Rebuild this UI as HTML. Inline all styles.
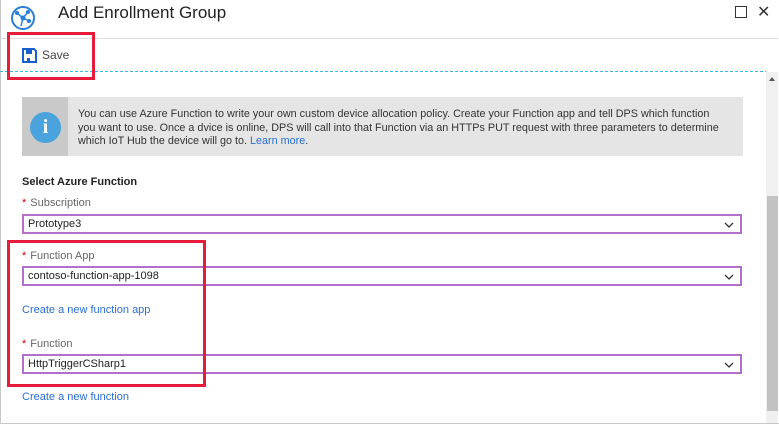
<!DOCTYPE html>
<html><head><style>
body{margin:0;width:779px;height:425px;overflow:hidden;background:#fff;font-family:"Liberation Sans",sans-serif;position:relative}
.a{position:absolute}
.t{font-size:10.8px;color:#222;white-space:nowrap}
.lbl{font-size:11px;color:#666}
.lbl b{color:#c00;font-weight:normal;margin-right:4px}
.inp{position:absolute;left:22px;width:720px;height:20px;border:2px solid #b36fcb;box-sizing:border-box;font-size:11px;color:#222;line-height:17px;padding-left:4px}
.inp svg{position:absolute;right:6px;top:6px}
.lnk{font-size:11px;color:#2b6fd1}
</style></head><body>
<div class="a" style="left:0;top:0;width:778px;height:423px;border:1px solid #c8c8c8;border-top:none"></div>
<svg class="a" style="left:10px;top:5px" width="26" height="26" viewBox="0 0 26 26"><circle cx="13" cy="13" r="11" fill="none" stroke="#2a7ed6" stroke-width="2"/><g stroke="#2a7ed6" stroke-width="1.5" fill="#2a7ed6"><line x1="13" y1="13" x2="7" y2="8"/><line x1="13" y1="13" x2="18" y2="7"/><line x1="13" y1="13" x2="19" y2="16"/><line x1="13" y1="13" x2="11" y2="21"/><circle cx="13" cy="13" r="1.8"/><circle cx="7" cy="8" r="1.3"/><circle cx="18" cy="7" r="1.3"/><circle cx="19" cy="16" r="1.3"/></g></svg>
<div class="a" style="left:58px;top:3px;font-size:17px;color:#222">Add Enrollment Group</div>
<div class="a" style="left:735px;top:6px;width:10px;height:10px;border:1px solid #333"></div>
<div class="a" style="left:757px;top:2px;font-size:16px;color:#333">✕</div>
<div class="a" style="left:0;top:38px;width:778px;height:1px;background:#ddd"></div>
<svg class="a" style="left:22px;top:48px" width="15" height="15" viewBox="0 0 15 15"><path d="M1 1h11l2 2v11H1z" fill="none" stroke="#1b5fcc" stroke-width="2"/><rect x="4" y="2" width="6" height="4" fill="#1b5fcc"/><rect x="5" y="10" width="3" height="3" fill="#1b5fcc"/></svg>
<div class="a" style="left:42px;top:48px;font-size:12px;color:#444">Save</div>
<div class="a" style="left:0;top:71px;width:766px;height:1px;background:repeating-linear-gradient(90deg,#3bb6e0 0 3px,transparent 3px 5px)"></div>
<div class="a" style="left:7px;top:32px;width:82px;height:42px;border:3px solid #e51c3a"></div>
<div class="a" style="left:766px;top:72px;width:12px;height:351px;background:#f0f0f0"></div>
<div class="a" style="left:767px;top:196px;width:11px;height:215px;background:#c2c2c2"></div>
<div class="a" style="left:769px;top:77px;width:0;height:0;border:3px solid transparent;border-bottom:4px solid #555;border-top:none"></div>
<div class="a" style="left:22px;top:97px;width:721px;height:59px;background:#e5e5e5"></div>
<div class="a" style="left:22px;top:97px;width:46px;height:59px;background:#c9c9c9"></div>
<div class="a" style="left:30px;top:112px;width:31px;height:31px;border-radius:50%;background:#4aa3dc;color:#fff;font:bold 20px 'Liberation Serif',serif;text-align:center;line-height:31px">i</div>
<div class="a t" style="left:78px;top:108px;line-height:13.5px;color:#333">You can use Azure Function to write your own custom device allocation policy. Create your Function app and tell DPS which function<br>you want to use. Once a dvice is online, DPS will call into that Function via an HTTPs PUT request with three parameters to determine<br>which IoT Hub the device will go to. <span class="lnk" style="font-size:10.8px">Learn more</span>.</div>
<div class="a" style="left:22px;top:176px;font-size:11px;font-weight:bold;color:#222">Select Azure Function</div>
<div class="a lbl" style="left:22px;top:197px"><b>*</b>Subscription</div>
<div class="inp" style="top:214px">Prototype3<svg width="10" height="6"><path d="M1 1l4 4 4-4" fill="none" stroke="#333" stroke-width="1.3"/></svg></div>
<div class="a lbl" style="left:22px;top:250px"><b>*</b>Function App</div>
<div class="inp" style="top:266px">contoso-function-app-1098<svg width="10" height="6"><path d="M1 1l4 4 4-4" fill="none" stroke="#333" stroke-width="1.3"/></svg></div>
<div class="a lnk" style="left:22px;top:304px">Create a new function app</div>
<div class="a lbl" style="left:22px;top:338px"><b>*</b>Function</div>
<div class="inp" style="top:354px">HttpTriggerCSharp1<svg width="10" height="6"><path d="M1 1l4 4 4-4" fill="none" stroke="#333" stroke-width="1.3"/></svg></div>
<div class="a lnk" style="left:22px;top:391px">Create a new function</div>
<div class="a" style="left:7px;top:240px;width:193px;height:141px;border:3px solid #e51c3a"></div>
</body></html>
